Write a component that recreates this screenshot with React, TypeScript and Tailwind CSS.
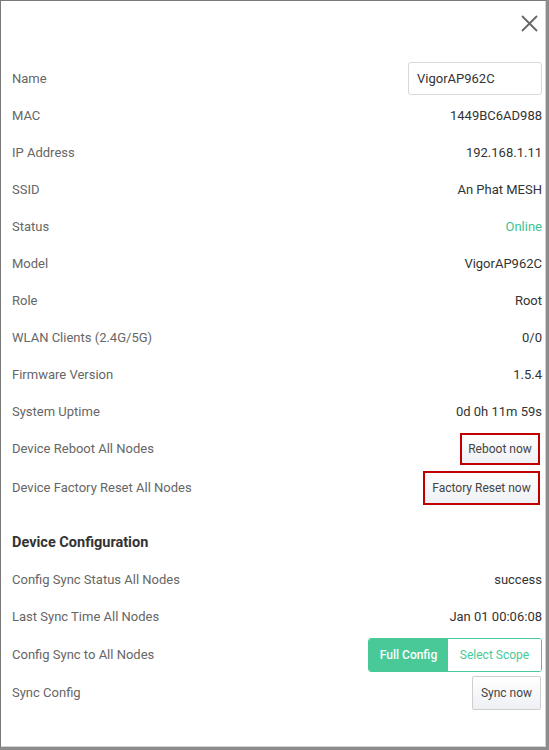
import React from "react";

const rows: { label: string; value: string; green?: boolean }[] = [
  { label: "MAC", value: "1449BC6AD988" },
  { label: "IP Address", value: "192.168.1.11" },
  { label: "SSID", value: "An Phat MESH" },
  { label: "Status", value: "Online", green: true },
  { label: "Model", value: "VigorAP962C" },
  { label: "Role", value: "Root" },
  { label: "WLAN Clients (2.4G/5G)", value: "0/0" },
  { label: "Firmware Version", value: "1.5.4" },
  { label: "System Uptime", value: "0d 0h 11m 59s" },
];

function Row({ label, children, h = "h-[37px]" }: { label: string; children: React.ReactNode; h?: string }) {
  return (
    <div className={`flex items-center justify-between ${h}`}>
      <span className="text-[13px] text-[#666]">{label}</span>
      {children}
    </div>
  );
}

export default function App() {
  return (
    <div
      className="w-[549px] h-[750px] bg-[#8c8c8c] flex flex-col"
      style={{ fontFamily: "Roboto, 'Liberation Sans', sans-serif" }}
    >
      <div className="flex-1 flex flex-col border-l border-t border-[#7a7a7a] mr-[3px] mb-[3px] bg-[#d4d4d4] pr-px pb-px">
        <div className="flex-1 bg-white pl-[11px] pr-[3px]">
          {/* header */}
          <div className="h-[59px] flex justify-end pt-[14px] pr-[4px]">
            <svg width="17" height="17" viewBox="0 0 17 17" stroke="#666" strokeWidth="1.8" fill="none">
              <line x1="1" y1="1" x2="16" y2="16" />
              <line x1="16" y1="1" x2="1" y2="16" />
            </svg>
          </div>

          <Row label="Name">
            <div className="w-[134px] h-[33px] border border-[#d9d9d9] rounded-[3px] flex items-center pl-[8px] text-[13px] text-[#333]">
              VigorAP962C
            </div>
          </Row>

          {rows.map((r) => (
            <Row key={r.label} label={r.label}>
              <span className={`text-[13px] ${r.green ? "text-[#3ec38f]" : "text-[#333]"}`}>{r.value}</span>
            </Row>
          ))}

          <Row label="Device Reboot All Nodes" h="h-[38px]">
            <div className="mr-[2px] border-2 border-[#c00000] w-[80px] h-[32px] flex items-center justify-center bg-gradient-to-b from-white to-[#eef0f4] text-[12px] text-[#444] whitespace-nowrap">
              Reboot now
            </div>
          </Row>
          <Row label="Device Factory Reset All Nodes" h="h-[39px]">
            <div className="mr-[2px] border-2 border-[#c00000] w-[117px] h-[34px] flex items-center justify-center bg-gradient-to-b from-white to-[#eef0f4] text-[12px] text-[#444] whitespace-nowrap">
              Factory Reset now
            </div>
          </Row>

          <div className="h-[37px] mt-[17px] flex items-center text-[14.5px] font-bold text-[#333]">
            Device Configuration
          </div>

          <Row label="Config Sync Status All Nodes">
            <span className="text-[13px] text-[#333]">success</span>
          </Row>
          <Row label="Last Sync Time All Nodes">
            <span className="text-[13px] text-[#333]">Jan 01 00:06:08</span>
          </Row>
          <Row label="Config Sync to All Nodes" h="h-[39px]">
            <div className="flex h-[34px] border border-[#48c997] rounded-[3px] overflow-hidden text-[12px] whitespace-nowrap">
              <div className="w-[79px] bg-[#48c997] text-white font-medium flex items-center justify-center">
                Full Config
              </div>
              <div className="w-[93px] bg-white text-[#48c997] flex items-center justify-center">
                Select Scope
              </div>
            </div>
          </Row>
          <Row label="Sync Config" h="h-[38px]">
            <div className="mr-px w-[69px] h-[34px] border border-[#cfcfcf] rounded-[2px] flex items-center justify-center bg-gradient-to-b from-white to-[#eef0f4] text-[12px] text-[#444] whitespace-nowrap">
              Sync now
            </div>
          </Row>
        </div>
      </div>
    </div>
  );
}
